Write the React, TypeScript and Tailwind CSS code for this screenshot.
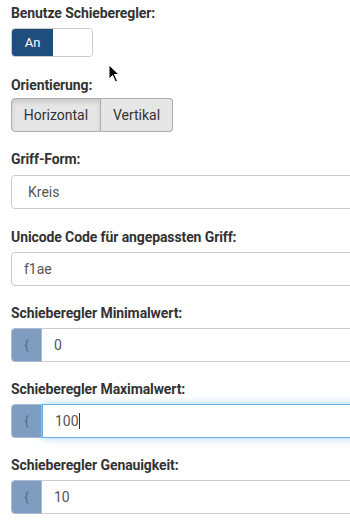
import React from "react";

function Label({ children }: { children: React.ReactNode }) {
  return (
    <div className="h-[18px] text-[14px] leading-[18px] font-bold text-[#333] tracking-[-0.1px]">{children}</div>
  );
}

function AddonInput({ value, focused }: { value: string; focused?: boolean }) {
  return (
    <div className="flex h-[34px] w-[400px]">
      <div className="w-[31px] shrink-0 bg-[#7f9dc1] border border-[#a9bbd2] rounded-l-[4px] flex items-center justify-center text-[#55698a] text-[13px]">
        {"{"}
      </div>
      <div
        className={
          focused
            ? "flex-1 flex items-center pl-[12px] border border-[#66afe9] shadow-[0_0_8px_rgba(102,175,233,0.6)] text-[14px] text-[#555] bg-white"
            : "flex-1 flex items-center pl-[12px] border border-[#ccc] border-l-0 text-[14px] text-[#555] bg-white"
        }
      >
        <span>{value}</span>
        {focused && <span className="inline-block w-px h-[16px] bg-[#333]" />}
      </div>
    </div>
  );
}

export default function App() {
  return (
    <div className="relative w-[350px] h-[529px] overflow-hidden bg-white font-['Roboto',sans-serif]">
      <div className="pl-[11px] pt-[4px] flex flex-col">
        <Label>Benutze Schieberegler:</Label>
        <div className="mt-[6px] flex w-[82px] h-[29px] border border-[#ccc] rounded-[4px] overflow-hidden">
          <div className="w-[41px] bg-[#1f4e7e] text-white text-[13px] flex items-center justify-center">An</div>
          <div className="flex-1 bg-white" />
        </div>
        <div className="mt-[19px]">
          <Label>Orientierung:</Label>
        </div>
        <div className="mt-[4px] flex">
          <div className="w-[90px] h-[34px] flex items-center justify-center bg-[#e6e6e6] border border-[#adadad] rounded-l-[4px] text-[14px] text-[#333] shadow-[inset_0_3px_5px_rgba(0,0,0,0.125)]">
            Horizontal
          </div>
          <div className="w-[72px] h-[34px] flex items-center justify-center bg-[#e6e6e6] border border-[#adadad] border-l-0 rounded-r-[4px] text-[14px] text-[#333]">
            Vertikal
          </div>
        </div>
        <div className="mt-[18px]">
          <Label>Griff-Form:</Label>
        </div>
        <div className="mt-[7px] w-[400px] h-[34px] border border-[#ccc] rounded-[4px] flex items-center pl-[16px] text-[14px] text-[#555]">
          Kreis
        </div>
        <div className="mt-[19px]">
          <Label>Unicode Code für angepassten Griff:</Label>
        </div>
        <div className="mt-[6px] w-[400px] h-[34px] border border-[#ccc] rounded-[4px] flex items-center pl-[12px] text-[14px] text-[#555]">
          f1ae
        </div>
        <div className="mt-[18px]">
          <Label>Schieberegler Minimalwert:</Label>
        </div>
        <div className="mt-[6px]">
          <AddonInput value="0" />
        </div>
        <div className="mt-[18px]">
          <Label>Schieberegler Maximalwert:</Label>
        </div>
        <div className="mt-[6px]">
          <AddonInput value="100" focused />
        </div>
        <div className="mt-[18px]">
          <Label>Schieberegler Genauigkeit:</Label>
        </div>
        <div className="mt-[6px]">
          <AddonInput value="10" />
        </div>
      </div>
      <svg className="absolute left-[108px] top-[64px]" width="14" height="20" viewBox="0 0 14 20">
        <path d="M1 1 L1 15 L4.5 11.5 L7.5 18 L9.5 17 L6.5 10.5 L11 10.5 Z" fill="#000" stroke="#fff" strokeWidth="1" />
      </svg>
    </div>
  );
}
